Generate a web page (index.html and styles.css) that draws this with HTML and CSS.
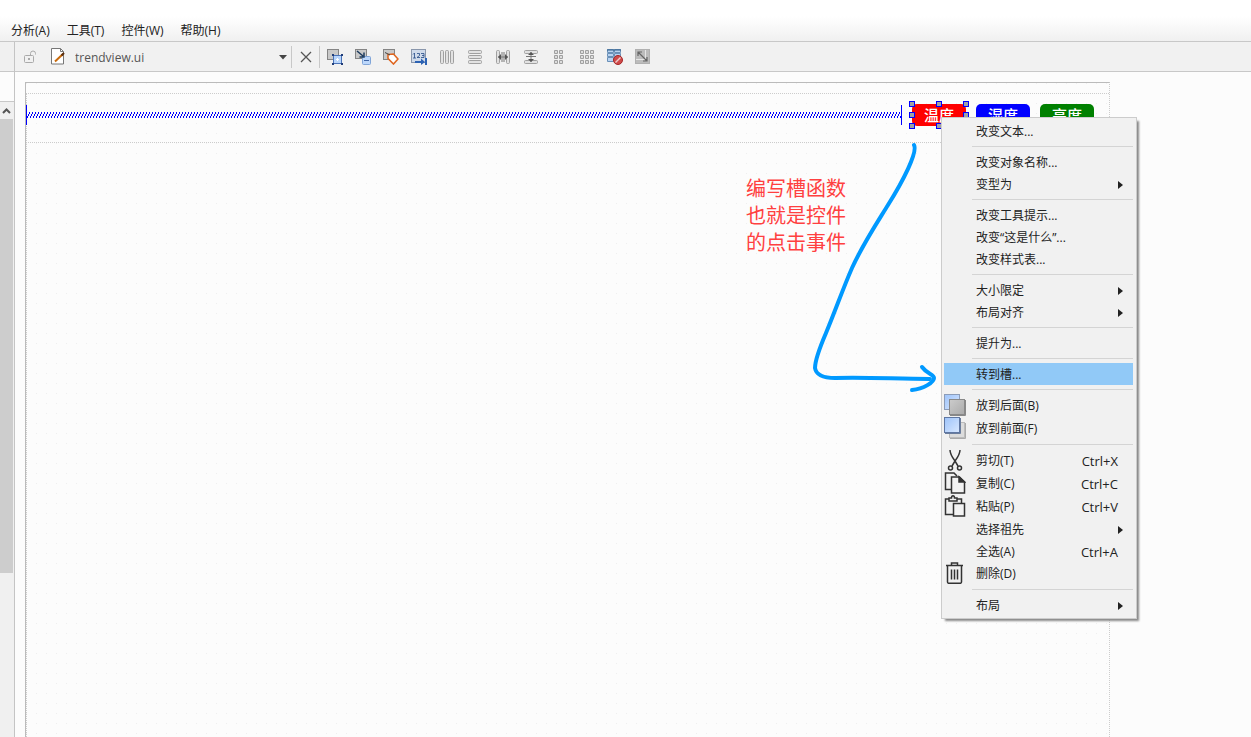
FILE: index.html
```html
<!DOCTYPE html>
<html lang="zh-CN">
<head>
  <meta charset="UTF-8">
  <meta name="viewport" content="width=device-width, initial-scale=1.0">
  <title>trendview.ui</title>
  <link rel="stylesheet" href="styles.css">
</head>
<body>
  <nav class="menubar">
    <button type="button">分析(A)</button>
    <button type="button">工具(T)</button>
    <button type="button">控件(W)</button>
    <button type="button">帮助(H)</button>
  </nav>

  <div class="workspace">
    <aside class="dock">
      <div class="dock-title"></div>
      <div class="dock-head"></div>
      <div class="scrollbar">
        <button type="button" class="scroll-up" aria-label="向上滚动">
          <svg width="9" height="6" viewBox="0 0 9 6"><path d="M1 5 4.500 1.500 8 5" fill="none" stroke="#555" stroke-width="2"/></svg>
        </button>
        <div class="thumb"></div>
      </div>
    </aside>

    <main class="editor">
      <div class="toolbar">
        <button type="button" class="lock" aria-label="锁定">
          <svg width="14" height="14" viewBox="0 0 14 14" fill="none" stroke="#aaa"><rect x="1.500" y="5.500" width="9" height="7" rx="1"/><path d="M7.500 5.500V3.500a2.500 2.500 0 0 1 5 0V4.500"/><path d="M5 9h2" stroke-width="2"/></svg>
        </button>
        <svg class="doc" width="14" height="17" viewBox="0 0 14 17"><path d="M.5.5h9l3 3v12.500H.5z" fill="#fff" stroke="#777"/><path d="M9.500.5v3h3" fill="none" stroke="#777"/><path d="M4 13.500 12 6" stroke="#c8690a" stroke-width="2"/><path d="M10.500 7.500 13 5" stroke="#5a2d0c" stroke-width="2"/></svg>
        <div class="combo">
          <select aria-label="文件"><option>trendview.ui</option></select>
          <svg width="8" height="5" viewBox="0 0 8 5"><path d="M0 0h8L4 4.500z" fill="#444"/></svg>
        </div>
        <button type="button" class="close" aria-label="关闭">
          <svg width="12" height="12" viewBox="0 0 12 12"><path d="M1 1 11 11M11 1 1 11" stroke="#555" stroke-width="1.300"/></svg>
        </button>
        <div class="tools">
          <button type="button" aria-label="编辑控件"><svg width="16" height="16" viewBox="0 0 16 16"><rect x=".5" y=".5" width="11" height="10" fill="#c9c9c9" stroke="#858585"/><rect x="6.500" y="6.500" width="8" height="8" fill="#b8d5fb" stroke="#4a72b8"/><path d="M9 10.500h3M10.500 9v3" stroke="#fff"/><path d="M5 5h2v2H5zM14 5h2v2h-2zM5 14h2v2H5zM14 14h2v2h-2z" fill="#1f3c78"/></svg></button>
          <button type="button" aria-label="编辑信号/槽"><svg width="16" height="16" viewBox="0 0 16 16"><rect x=".5" y=".5" width="11" height="9" fill="#c9c9c9" stroke="#858585"/><rect x="7.500" y="7.500" width="8" height="8" rx="1" fill="#bcd7fb" stroke="#80a5d8"/><path d="M9 11.500h5" stroke="#3d64a5"/><path d="M2 2 8 7M9 3.500V8H4.500" fill="none" stroke="#1d3b5e" stroke-width="1.500"/></svg></button>
          <button type="button" aria-label="编辑伙伴"><svg width="16" height="16" viewBox="0 0 16 16"><rect x=".5" y=".5" width="11" height="10" fill="#c9c9c9" stroke="#858585"/><path d="M5 5.500 10.500 5 15 10 10.500 15 5 9.500z" fill="#fff" stroke="#df6620" stroke-width="1.600"/><path d="M2 3.500 7 6" stroke="#444"/></svg></button>
          <button type="button" aria-label="编辑Tab顺序"><svg width="16" height="16" viewBox="0 0 16 16"><rect x=".5" y=".5" width="14" height="13" fill="#cfdaea" stroke="#8a97ac"/><path d="M2 5.500 3.500 4v5M2 9h3M6 4.500h2.500V6.500L6 8.500H9M10 4.500h3v4h-3M11 6.500h2" fill="none" stroke="#244a86" stroke-width=".8"/><path d="M4 13h8" stroke="#2c62b3" stroke-width="2"/><path d="M10 9.500 14 13l-4 3zM14 9h2v7h-2z" fill="#2c62b3"/></svg></button>
          <button type="button" aria-label="水平布局"><svg width="16" height="16" viewBox="0 0 16 16" fill="#e2e2e2" stroke="#a0a0a0"><rect x="1.500" y="1.500" width="3" height="13" rx="1"/><rect x="6.500" y="1.500" width="3" height="13" rx="1"/><rect x="11.500" y="1.500" width="3" height="13" rx="1"/></svg></button>
          <button type="button" aria-label="垂直布局"><svg width="16" height="16" viewBox="0 0 16 16" fill="#e2e2e2" stroke="#a0a0a0"><rect x="1.500" y="1.500" width="13" height="3" rx="1"/><rect x="1.500" y="6.500" width="13" height="3" rx="1"/><rect x="1.500" y="11.500" width="13" height="3" rx="1"/></svg></button>
          <button type="button" aria-label="水平分裂器"><svg width="16" height="16" viewBox="0 0 16 16"><g fill="#e2e2e2" stroke="#a0a0a0"><rect x="1.500" y="1.500" width="3" height="13" rx="1"/><rect x="11.500" y="1.500" width="3" height="13" rx="1"/></g><path d="M7 3v10M9 3v10M3 8h10" stroke="#777"/><path d="M6 5v6L3 8zM10 5v6l3-3z" fill="#555"/></svg></button>
          <button type="button" aria-label="垂直分裂器"><svg width="16" height="16" viewBox="0 0 16 16"><g fill="#e2e2e2" stroke="#a0a0a0"><rect x="1.500" y="1.500" width="13" height="3" rx="1"/><rect x="1.500" y="11.500" width="13" height="3" rx="1"/></g><path d="M3 7.500h10M8 3v10" stroke="#777"/><path d="M5 6h6L8 3zM5 10h6l-3 3z" fill="#555"/></svg></button>
          <button type="button" aria-label="窗体布局"><svg width="16" height="16" viewBox="0 0 16 16" fill="#ddd" stroke="#a0a0a0"><path d="M3.500 1.500h3v3h-3zM8.500 1.500h3v3h-3zM3.500 6.500h3v3h-3zM8.500 6.500h3v3h-3zM3.500 11.500h3v3h-3zM8.500 11.500h3v3h-3z"/></svg></button>
          <button type="button" aria-label="栅格布局"><svg width="16" height="16" viewBox="0 0 16 16" fill="#ddd" stroke="#a0a0a0"><path d="M1.500 1.500h3v3h-3zM6.500 1.500h3v3h-3zM11.500 1.500h3v3h-3zM1.500 6.500h3v3h-3zM6.500 6.500h3v3h-3zM11.500 6.500h3v3h-3zM1.500 11.500h3v3h-3zM6.500 11.500h3v3h-3zM11.500 11.500h3v3h-3z"/></svg></button>
          <button type="button" aria-label="打破布局"><svg width="16" height="16" viewBox="0 0 16 16"><path d="M.5.5h6v3h-6zM7.500.5h6v3h-6zM.5 4.500h6v3h-6zM7.500 4.500h6v3h-6zM.5 8.500h6v4h-6z" fill="#b9d3f0" stroke="#6a90b8"/><path d="M0 1h14" stroke="#315e8a"/><circle cx="11" cy="11" r="4.500" fill="#cf4a4a" stroke="#a52626"/><path d="M8.500 13.500 13.500 8.500" stroke="#f0c9c9" stroke-width="1.500"/></svg></button>
          <button type="button" aria-label="调整大小"><svg width="16" height="16" viewBox="0 0 16 16"><rect x=".5" y=".5" width="14" height="14" fill="#bcbcbc" stroke="#b0b0b0"/><path d="M1 10.500h9.500V1" fill="none" stroke="#e6e6e6"/><path d="M3 3 12 12M3 7V3H7M12 8v4H8" fill="none" stroke="#666" stroke-width="1.200"/></svg></button>
        </div>
      </div>

      <div class="canvas">
        <div class="form">
          <div class="layout">
            <div class="spacer">
              <svg width="100%" height="6">
                <defs><pattern id="teeth" width="3" height="6" patternUnits="userSpaceOnUse"><path d="M2 0h1v2H2zM1 2h1v2H1zM0 4h1v2H0z" fill="#0000ff"/></pattern></defs>
                <rect width="100%" height="6" fill="url(#teeth)"/>
              </svg>
            </div>
            <div class="selected">
              <button type="button" class="pill red">温度</button>
              <i class="handle t l"></i><i class="handle t c"></i><i class="handle t r"></i>
              <i class="handle m l"></i><i class="handle m r"></i>
              <i class="handle b l"></i><i class="handle b c"></i><i class="handle b r"></i>
            </div>
            <button type="button" class="pill blue">湿度</button>
            <button type="button" class="pill green">亮度</button>
          </div>

          <p class="note">编写槽函数<br>也就是控件<br>的点击事件</p>
          <svg class="arrow" width="136" height="260" viewBox="0 0 136 260" fill="none" stroke="#0099ff" stroke-width="4" stroke-linecap="round" stroke-linejoin="round">
            <path d="M108 7C112 14 97 43 82 67 69 88 57 106 46 130 36 153 30 171 20 195 14 209 9 221 9 230 10 236 16 240 29 240 62 239 90 241 124 241"/>
            <path d="M116 229C121 236 128 236 128 240S118 251 106 252"/>
          </svg>

          <div class="menu" role="menu">
            <button type="button">改变文本...</button>
            <hr>
            <button type="button">改变对象名称...</button>
            <button type="button" class="sub">变型为</button>
            <hr>
            <button type="button">改变工具提示...</button>
            <button type="button">改变“这是什么”...</button>
            <button type="button">改变样式表...</button>
            <hr>
            <button type="button" class="sub">大小限定</button>
            <button type="button" class="sub">布局对齐</button>
            <hr>
            <button type="button">提升为...</button>
            <hr>
            <button type="button" class="active">转到槽...</button>
            <hr>
            <button type="button" class="tall">
              <svg width="22" height="22" viewBox="0 0 22 22"><defs><linearGradient id="blueBox" x2="1" y2="1"><stop stop-color="#9dc3fa"/><stop offset="1" stop-color="#d9e8ff"/></linearGradient><linearGradient id="grayBox" x2="1" y2="1"><stop stop-color="#ccc"/><stop offset="1" stop-color="#aaa"/></linearGradient></defs><rect x=".5" y=".5" width="15" height="15" fill="url(#blueBox)" stroke="#8b9cb8"/><rect x="5.500" y="5.500" width="15" height="15" fill="url(#grayBox)" stroke="#888"/><path d="M6 21.500H21.500V6" fill="none" stroke="#888"/></svg>
              放到后面(B)
            </button>
            <button type="button" class="tall">
              <svg width="22" height="22" viewBox="0 0 22 22"><rect x="5.500" y="5.500" width="15" height="15" fill="#dcdcdc" stroke="#bbb"/><path d="M6 21.500H21.500V6" fill="none" stroke="#aaa"/><rect x=".5" y=".5" width="15" height="15" fill="url(#blueBox)" stroke="#5f77a2"/><path d="M1 16.500H16.500V1" fill="none" stroke="#6b7d9c"/></svg>
              放到前面(F)
            </button>
            <hr>
            <button type="button" class="tall">
              <svg width="22" height="22" viewBox="0 0 22 22" fill="none" stroke="#333" stroke-width="1.500"><path d="M6 1C6 5 8 8 11 12L14 17M16 1C16 5 14 8 11 12L8 17"/><circle cx="6.500" cy="19" r="2"/><circle cx="15.500" cy="19" r="2"/></svg>
              剪切(T)<span>Ctrl+X</span>
            </button>
            <button type="button" class="tall">
              <svg width="22" height="22" viewBox="0 0 22 22" stroke="#333" stroke-width="1.500" fill="none"><path d="M7 17.500H1.500V1H10L13 4"/><path d="M7.500 5H15.500L20.500 10V21H7.500z" fill="#f3f3f3"/><path d="M15 5V10H20.500z" fill="#333"/></svg>
              复制(C)<span>Ctrl+C</span>
            </button>
            <button type="button" class="tall">
              <svg width="22" height="22" viewBox="0 0 22 22" stroke="#333" stroke-width="1.500" fill="none"><path d="M9 19.500H1.500V4H5M13 4H17.500V8"/><path d="M5 6V3H7.500C7.500 0 10.500 0 10.500 3H13V6z"/><path d="M9.500 8.500H20.500V21H9.500z" fill="#f3f3f3"/></svg>
              粘贴(P)<span>Ctrl+V</span>
            </button>
            <button type="button" class="sub">选择祖先</button>
            <button type="button">全选(A)<span>Ctrl+A</span></button>
            <button type="button" class="tall">
              <svg width="22" height="22" viewBox="0 0 22 22" stroke="#333" stroke-width="1.500" fill="none"><path d="M2 3.500H19M7.500 3.500V1H13.500V3.500M3.500 4V20Q3.500 21.300 5 21.300H16Q17.500 21.300 17.500 20V4M7.500 7.500V17.500M10.500 7.500V17.500M13.500 7.500V17.500"/></svg>
              删除(D)
            </button>
            <hr>
            <button type="button" class="sub">布局</button>
          </div>
        </div>
      </div>
    </main>
  </div>
</body>
</html>
```
FILE: styles.css
```css
* { box-sizing: border-box; }
body { margin: 0; height: 100vh; overflow: hidden; display: flex; flex-direction: column; font: 12px/20px "Open Sans", "Noto Sans CJK SC", sans-serif; color: #222; background: #fcfcfc; }
button { padding: 0; border: 0; background: none; font: inherit; color: inherit; }
svg { display: block; flex: none; }

.menubar { display: flex; gap: 17px; padding: 21px 11px 0; background: linear-gradient(#fff 40%, #f0f0f0); border-bottom: 1px solid #c8c8c8; }

.workspace { flex: 1; display: flex; min-height: 0; }

/* left dock */
.dock { width: 15px; border-right: 1px solid #c4c4c4; background: #f0f0f0; display: flex; flex-direction: column; }
.dock-title { height: 30px; border-bottom: 1px solid #c8c8c8; }
.dock-head { height: 30px; background: #fcfcfc; border-bottom: 1px solid #c8c8c8; }
.scrollbar { flex: 1; width: 13px; }
.scroll-up { width: 13px; height: 17px; display: flex; align-items: center; justify-content: center; }
.thumb { height: 74%; max-height: 454px; background: #cdcdcd; }

/* toolbar */
.editor { flex: 1; min-width: 0; display: flex; flex-direction: column; }
.toolbar { height: 30px; display: flex; align-items: center; padding-left: 8px; background: #f1f1f1; border-bottom: 1px solid #c8c8c8; }
.lock { width: 28px; }
.combo { position: relative; width: 217px; height: 22px; margin-left: 10px; border-right: 1px solid #c8c8c8; }
.combo select { width: 100%; height: 22px; padding: 2px 0 0; border: 0; appearance: none; background: none; font: inherit; color: #555; }
.combo svg { position: absolute; right: 4px; top: 9px; pointer-events: none; }
.close { width: 28px; height: 22px; display: flex; align-items: center; justify-content: center; border-right: 1px solid #c8c8c8; }
.tools { display: flex; gap: 12px; padding-left: 7px; }

/* form being edited */
.canvas { flex: 1; min-height: 0; padding: 10px 141px 0 10px; }
.form { position: relative; height: 100%; padding-top: 10px; border: 1px solid #bbb; border-right: 1px dotted #ccc; border-bottom: 0; background: conic-gradient(at 1px 1px, transparent 75%, #eee 0) 0 0 / 10px 10px; }
.form::before { content: ""; position: absolute; inset: 10px auto 0 0; border-left: 1px dotted #ccc; }
.layout { display: flex; align-items: flex-start; gap: 10px; height: 50px; padding: 10px 15px 0 0; border: 1px dotted #ccc; border-width: 1px 0; }
.spacer { flex: 1; height: 20px; margin-top: 1px; position: relative; display: flex; align-items: center; border: 1px solid #0000ff; border-width: 0 1px; }
.pill { display: block; width: 54px; height: 22px; border-radius: 5px; color: #fff; font-size: 15px; font-weight: 500; line-height: 22px; }
.red { background: #ff0000; }
.blue { background: #0000ff; }
.green { background: #008000; }
.selected { position: relative; }
.handle { position: absolute; width: 6px; height: 6px; background: #a0a0a4; border: 1px solid #0000ff; }
.t { top: -3px; }
.m { top: 8px; }
.b { bottom: -3px; }
.l { left: -3px; }
.c { left: 24px; }
.r { right: -3px; }

/* annotation */
.note { position: absolute; top: 92px; right: 263px; margin: 0; font-size: 20px; line-height: 27px; color: #ff4040; }
.arrow { position: absolute; top: 55px; right: 167px; }

/* context menu */
.menu { position: absolute; top: 34px; right: -28px; width: 196px; padding: 2px 3px 2px 2px; background: #f1f1f1; border: 1px solid #ccc; box-shadow: 3px 3px 2px -1px #888; }
.menu button { position: relative; display: flex; align-items: center; width: 100%; height: 22px; padding: 2px 15px 0 32px; text-align: left; white-space: nowrap; }
.menu .tall { height: 23px; padding-top: 0; }
.menu .active { background: #91c9f7; }
.menu svg { position: absolute; left: 0; top: 0; }
.menu span { margin-left: auto; font-size: 13px; }
.menu hr { height: 9px; margin: 0 0 0 28px; border: 0; background: linear-gradient(#d4d4d4, #d4d4d4) 0 4px / 100% 1px no-repeat; }
.sub::after { content: ""; margin-left: auto; margin-right: -5px; border-left: 5px solid #222; border-top: 4px solid transparent; border-bottom: 4px solid transparent; }
```
